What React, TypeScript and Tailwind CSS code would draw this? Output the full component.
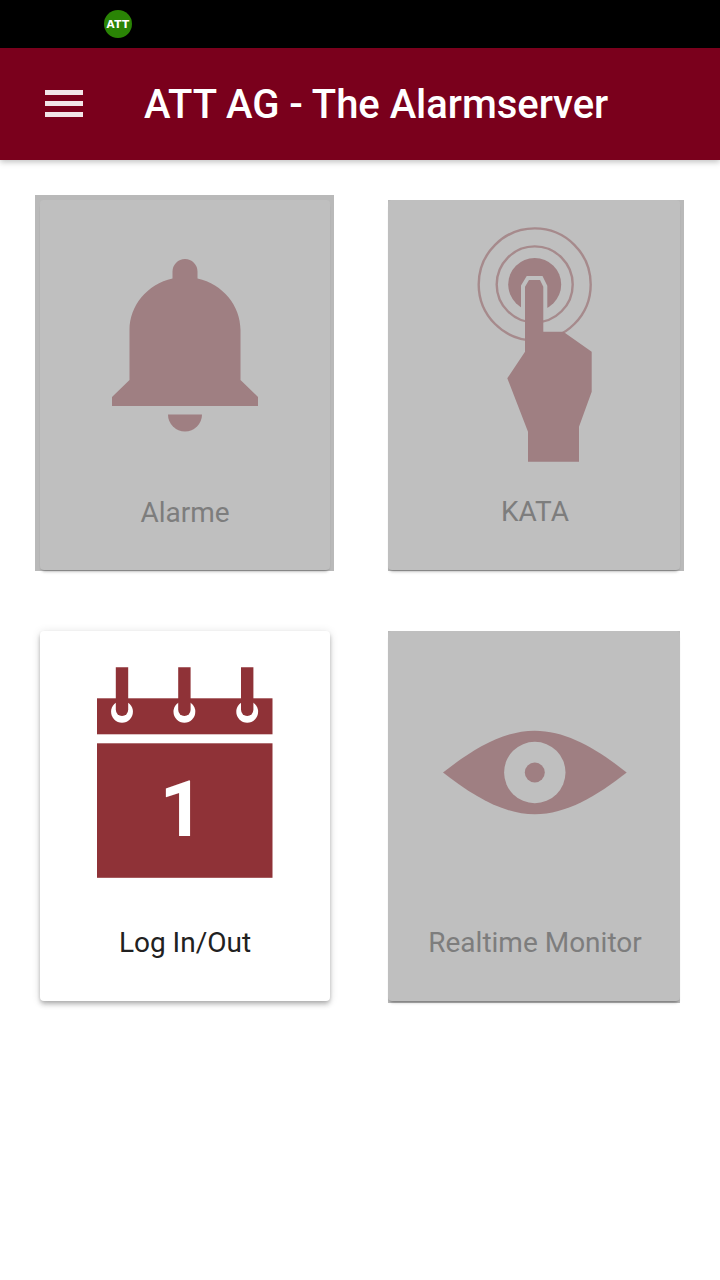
import React from 'react';

const FONT = "font-['Roboto',sans-serif]";

function BellIcon() {
  return (
    <svg viewBox="0 0 146 173" className="w-[146px] h-[173px] fill-[#9f7f82]">
      <path d="M60.5 19.5V12.5a12.5 12.5 0 0 1 25 0V19.5C111 25 128.5 47 128.5 71V121L146 138V147H0V138L17.5 121V71C17.5 47 35 25 60.5 19.5Z" />
      <path d="M56 155.5H90A17 17 0 0 1 56 155.5Z" />
    </svg>
  );
}

function TouchIcon() {
  return (
    <svg viewBox="477 227 116 236" className="w-[116px] h-[236px]">
      <circle cx="534.7" cy="284.4" r="56" fill="none" stroke="#a68a8c" strokeWidth="2.4" />
      <circle cx="534.7" cy="284.4" r="38" fill="none" stroke="#a68a8c" strokeWidth="2.4" />
      <circle cx="534.7" cy="284.4" r="26.5" fill="#9f7f82" />
      {/* gap between the fingertip and the disc */}
      <path d="M525 312V286.7L529 280H540L543.3 286.7V312" fill="#bfbfbf" stroke="#bfbfbf" strokeWidth="8" />
      <path
        d="M529 280H540L543.3 286.7V331.7H563.3L591.7 351.7V391.7L579 426.7V461.7H528V431.7L507.3 378.3L525 351.7V286.7Z"
        fill="#9f7f82"
      />
    </svg>
  );
}

function CalendarIcon() {
  const pegs = [122, 184.4, 247.2];
  return (
    <svg viewBox="97 667 176 211" className="w-[176px] h-[211px]">
      <rect x="97" y="698.3" width="175.5" height="36" fill="#8f3237" />
      <rect x="97" y="743.3" width="175.5" height="134.5" fill="#8f3237" />
      {pegs.map((x) => (
        <g key={x}>
          <circle cx={x} cy="711.8" r="10.9" fill="#fff" />
          <path d={`M${x - 6.2} 667.3h12.4V709.8a6.2 6.2 0 0 1-12.4 0Z`} fill="#8f3237" />
        </g>
      ))}
      <text x="182" y="836" textAnchor="middle" fontFamily="Roboto, sans-serif" fontWeight="700" fontSize="78" fill="#fff">
        1
      </text>
    </svg>
  );
}

function EyeIcon() {
  return (
    <svg viewBox="443 730 184 85" className="w-[184px] h-[85px]">
      <path
        d="M443 772.5C473 749 503 730.7 534.8 730.7S597 749 626.7 772.5C597 796 566 814.3 534.8 814.3S473 796 443 772.5Z"
        fill="#9f7f82"
      />
      <circle cx="534.8" cy="772.5" r="30.7" fill="#bfbfbf" />
      <circle cx="534.8" cy="772.5" r="10" fill="#9f7f82" />
    </svg>
  );
}

export default function App() {
  return (
    <div className={`${FONT} h-[1280px] bg-white overflow-hidden`}>
      {/* Status bar */}
      <div className="h-12 bg-black flex items-center pl-[104px]">
        <div className="w-7 h-7 rounded-full bg-[#2a8405] flex items-center justify-center text-white text-[10.5px] tracking-[0.3px] font-bold leading-none font-['DejaVu_Sans',sans-serif]">
          ATT
        </div>
      </div>

      {/* App bar */}
      <header className="relative h-[112px] bg-[#7a001c] flex items-center pl-[45px] shadow-[0_2px_6px_rgba(0,0,0,0.25)]">
        <div className="w-[38px] -mt-0.5 flex flex-col gap-[6px]">
          <div className="h-[5px] bg-[#f2e5e8]" />
          <div className="h-[5px] bg-[#f2e5e8]" />
          <div className="h-[5px] bg-[#f2e5e8]" />
        </div>
        <h1 className="ml-[61px] mt-0.5 text-[40px] font-medium tracking-[-0.04px] text-white leading-none">ATT AG - The Alarmserver</h1>
      </header>

      {/* Tiles */}
      <main className="grid grid-cols-[290px_292px] grid-rows-[371px_370px] gap-x-[58px] gap-y-[60px] pl-10 pt-10">
        <div className="-mt-[5px] -ml-[5px] -mr-1 pt-[5px] pl-[5px] pr-1 pb-px bg-[#b9b9b9] flex">
          <div className="flex-1 rounded bg-[#bfbfbf] shadow-[0_3px_3px_-2px_rgba(0,0,0,0.35),0_4px_5px_-3px_rgba(0,0,0,0.1)] flex flex-col items-center pt-[59px]">
            <BellIcon />
            <span className="mt-[65px] text-[28px] leading-8 text-[#7d7d7d]">Alarme</span>
          </div>
        </div>

        <div className="-mr-1 pr-1 pb-px bg-[#b9b9b9] flex">
          <div className="flex-1 rounded bg-[#bfbfbf] shadow-[0_3px_3px_-2px_rgba(0,0,0,0.35),0_4px_5px_-3px_rgba(0,0,0,0.1)] flex flex-col items-center pt-[27px] pl-0.5">
            <TouchIcon />
            <span className="mt-[33px] text-[28px] leading-8 text-[#7d7d7d]">KATA</span>
          </div>
        </div>

        <div className="rounded bg-white shadow-[0_2px_4px_-1px_rgba(0,0,0,0.2),0_4px_5px_0_rgba(0,0,0,0.14),0_1px_10px_0_rgba(0,0,0,0.12)] flex flex-col items-center pt-[36px]">
          <CalendarIcon />
          <span className="mt-[49px] text-[28px] leading-8 text-[#212121]">Log In/Out</span>
        </div>

        <div className="-mb-0.5 pb-0.5 bg-[#b9b9b9] flex">
          <div className="flex-1 rounded bg-[#bfbfbf] shadow-[0_3px_3px_-2px_rgba(0,0,0,0.35),0_4px_5px_-3px_rgba(0,0,0,0.1)] flex flex-col items-center pt-[99px] pl-0.5">
            <EyeIcon />
            <span className="mt-[112px] text-[28px] leading-8 text-[#7d7d7d]">Realtime Monitor</span>
          </div>
        </div>
      </main>
    </div>
  );
}
